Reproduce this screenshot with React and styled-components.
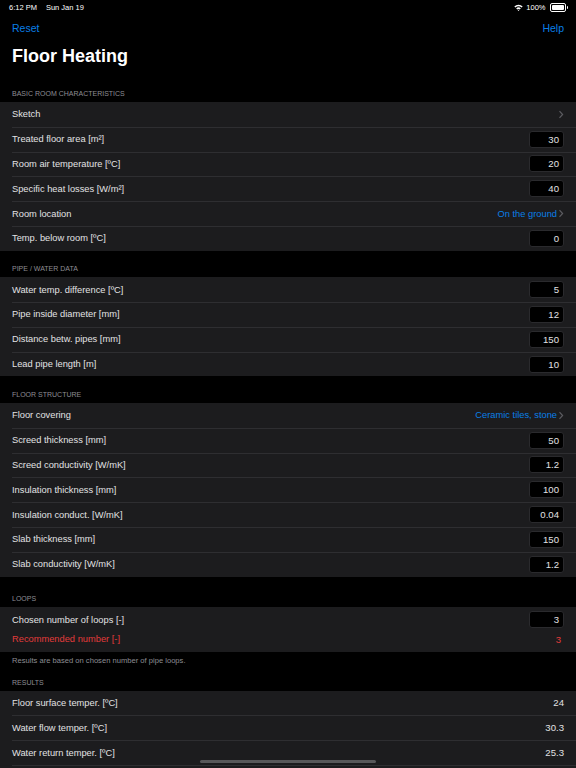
import React from 'react';
import styled, { createGlobalStyle } from 'styled-components';

const GlobalStyle = createGlobalStyle`
  html, body {
    margin: 0;
    padding: 0;
    background: #000;
  }
  body {
    font-family: 'Liberation Sans', Arial, sans-serif;
    -webkit-font-smoothing: antialiased;
  }
`;

const StyledPage = styled.div`
  width: 576px;
  height: 768px;
  overflow: hidden;
  position: relative;
  background: #000;
  color: #e4e4e6;
`;

const StyledStatusBar = styled.div`
  height: 14px;
  padding: 0 8px 0 9px;
  display: flex;
  align-items: center;
  justify-content: space-between;
  font-size: 7.5px;
  color: #fff;
`;

const StyledStatusLeft = styled.div`
  display: flex;
  gap: 9px;
`;

const StyledStatusRight = styled.div`
  display: flex;
  align-items: center;
  gap: 3px;
`;

const StyledBattery = styled.div`
  display: flex;
  align-items: center;
  gap: 1px;
  margin-left: 1px;
`;

const StyledBatteryBody = styled.div`
  width: 12px;
  height: 5px;
  border: 1px solid #fff;
  border-radius: 2px;
  padding: 1px;
`;

const StyledBatteryFill = styled.div`
  width: 100%;
  height: 100%;
  background: #fff;
  border-radius: 1px;
`;

const StyledBatteryNub = styled.div`
  width: 1.5px;
  height: 3px;
  background: #fff;
  border-radius: 0 1px 1px 0;
`;

const StyledNavBar = styled.div`
  height: 28px;
  padding: 0 12px;
  display: flex;
  align-items: center;
  justify-content: space-between;
`;

const StyledNavButton = styled.span`
  color: #0a7fe6;
  font-size: 10.5px;
`;

const StyledTitle = styled.h1`
  margin: 0;
  padding: 0 12px;
  height: 34px;
  line-height: 28px;
  font-size: 18px;
  font-weight: 700;
  color: #fff;
`;

const StyledSectionHeader = styled.div`
  padding: ${({ top }) => top}px 12px 3px;
  line-height: 10px;
  font-size: 7px;
  color: #8d8d93;
  text-transform: uppercase;
`;

const StyledGroup = styled.div`
  background: #1c1c1e;
  position: relative;
  padding-bottom: ${({ openEnd }) => (openEnd ? 4 : 0)}px;

  &::after {
    content: '';
    display: ${({ openEnd }) => (openEnd ? 'block' : 'none')};
    position: absolute;
    bottom: 3px;
    left: 12px;
    right: 0;
    height: 1px;
    background: #2e2e31;
  }
`;

const StyledRow = styled.div`
  height: ${({ h }) => h || 24.8}px;
  padding: 0 12px ${({ pb }) => pb || 0}px;
  box-sizing: border-box;
  display: flex;
  align-items: center;
  justify-content: space-between;
  position: relative;

  & + &::before {
    content: '';
    display: ${({ noLine }) => (noLine ? 'none' : 'block')};
    position: absolute;
    top: 0;
    left: 12px;
    right: 0;
    height: 1px;
    background: #2e2e31;
  }
`;

const StyledLabel = styled.span`
  font-size: 9.3px;
  color: ${({ red }) => (red ? '#e23b3b' : '#e2e2e4')};
`;

const StyledInput = styled.div`
  width: 35px;
  height: 17px;
  box-sizing: border-box;
  background: #000;
  border: 1px solid #2a2a2d;
  border-radius: 3px;
  padding: 0 4px;
  display: flex;
  align-items: center;
  justify-content: flex-end;
  font-size: 9.6px;
  color: #e2e2e4;
`;

const StyledValue = styled.span`
  font-size: 9.6px;
  padding-right: ${({ pad }) => pad}px;
  color: ${({ red }) => (red ? '#e23b3b' : '#e2e2e4')};
`;

const StyledLink = styled.span`
  display: flex;
  align-items: center;
  gap: 1px;
  font-size: 9.3px;
  color: #0a7fe6;
`;

const StyledFooter = styled.div`
  padding: 4px 12px 0;
  line-height: 10px;
  font-size: 7.6px;
  color: #8d8d93;
`;

const StyledHomeIndicator = styled.div`
  position: absolute;
  left: 200px;
  width: 176px;
  bottom: 5px;
  height: 3px;
  border-radius: 2px;
  background: #58585a;
`;

const Chevron = () => (
  <svg width="6" height="9" viewBox="0 0 6 9">
    <path d="M1.5 1.2 L4.6 4.5 L1.5 7.8" fill="none" stroke="#5c5c61" strokeWidth="1.2" />
  </svg>
);

const Wifi = () => (
  <svg width="9" height="7" viewBox="0 0 9 7">
    <path d="M0.3 2.5 A6 6 0 0 1 8.7 2.5 L7.6 3.6 A4.5 4.5 0 0 0 1.4 3.6 Z" fill="#fff" />
    <path d="M2.2 4.4 A3.4 3.4 0 0 1 6.8 4.4 L5.7 5.5 A1.9 1.9 0 0 0 3.3 5.5 Z" fill="#fff" />
    <path d="M4.5 7 L3.7 6.2 A1.1 1.1 0 0 1 5.3 6.2 Z" fill="#fff" />
  </svg>
);

const sections = [
  {
    title: 'Basic room characteristics',
    top: 13,
    rows: [
      { label: 'Sketch', link: '' },
      { label: 'Treated floor area [m²]', input: '30' },
      { label: 'Room air temperature [ºC]', input: '20' },
      { label: 'Specific heat losses [W/m²]', input: '40' },
      { label: 'Room location', link: 'On the ground' },
      { label: 'Temp. below room [ºC]', input: '0' },
    ],
  },
  {
    title: 'Pipe / water data',
    top: 13.5,
    rows: [
      { label: 'Water temp. difference [ºC]', input: '5' },
      { label: 'Pipe inside diameter [mm]', input: '12' },
      { label: 'Distance betw. pipes [mm]', input: '150' },
      { label: 'Lead pipe length [m]', input: '10' },
    ],
  },
  {
    title: 'Floor structure',
    top: 13.5,
    rows: [
      { label: 'Floor covering', link: 'Ceramic tiles, stone' },
      { label: 'Screed thickness [mm]', input: '50' },
      { label: 'Screed conductivity [W/mK]', input: '1.2' },
      { label: 'Insulation thickness [mm]', input: '100' },
      { label: 'Insulation conduct. [W/mK]', input: '0.04' },
      { label: 'Slab thickness [mm]', input: '150' },
      { label: 'Slab conductivity [W/mK]', input: '1.2' },
    ],
  },
  {
    title: 'Loops',
    top: 17.5,
    footer: 'Results are based on chosen number of pipe loops.',
    rows: [
      { label: 'Chosen number of loops [-]', input: '3', h: 25 },
      { label: 'Recommended number [-]', value: '3', red: true, noLine: true, h: 20, pb: 6 },
    ],
  },
  {
    title: 'Results',
    top: 11.5,
    openEnd: true,
    rows: [
      { label: 'Floor surface temper. [ºC]', value: '24' },
      { label: 'Water flow temper. [ºC]', value: '30.3' },
      { label: 'Water return temper. [ºC]', value: '25.3' },
    ],
  },
];

const RowContent = ({ row }) => {
  if (row.input !== undefined) return <StyledInput>{row.input}</StyledInput>;
  if (row.link !== undefined)
    return (
      <StyledLink>
        {row.link}
        <Chevron />
      </StyledLink>
    );
  return (
    <StyledValue red={row.red} pad={row.red ? 3 : 0}>
      {row.value}
    </StyledValue>
  );
};

const App = () => (
  <>
    <GlobalStyle />
    <StyledPage>
      <StyledStatusBar>
        <StyledStatusLeft>
          <span>6:12 PM</span>
          <span>Sun Jan 19</span>
        </StyledStatusLeft>
        <StyledStatusRight>
          <Wifi />
          <span>100%</span>
          <StyledBattery>
            <StyledBatteryBody>
              <StyledBatteryFill />
            </StyledBatteryBody>
            <StyledBatteryNub />
          </StyledBattery>
        </StyledStatusRight>
      </StyledStatusBar>
      <StyledNavBar>
        <StyledNavButton>Reset</StyledNavButton>
        <StyledNavButton>Help</StyledNavButton>
      </StyledNavBar>
      <StyledTitle>Floor Heating</StyledTitle>
      {sections.map((section) => (
        <React.Fragment key={section.title}>
          <StyledSectionHeader top={section.top}>{section.title}</StyledSectionHeader>
          <StyledGroup openEnd={section.openEnd}>
            {section.rows.map((row) => (
              <StyledRow key={row.label} h={row.h} pb={row.pb} noLine={row.noLine}>
                <StyledLabel red={row.red}>{row.label}</StyledLabel>
                <RowContent row={row} />
              </StyledRow>
            ))}
          </StyledGroup>
          {section.footer && <StyledFooter>{section.footer}</StyledFooter>}
        </React.Fragment>
      ))}
      <StyledHomeIndicator />
    </StyledPage>
  </>
);

export default App;
